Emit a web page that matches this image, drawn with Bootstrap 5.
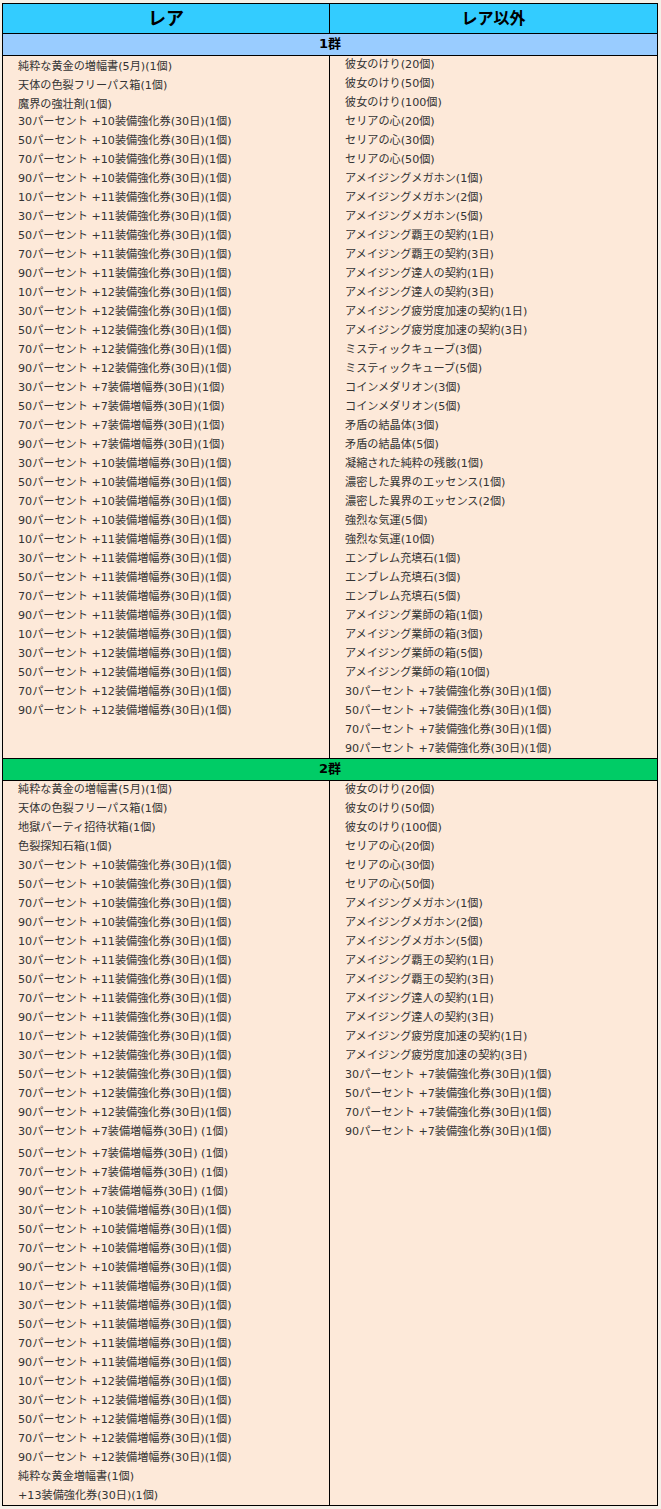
<!DOCTYPE html>
<html lang="ja"><head><meta charset="utf-8"><title>レア</title>
<link href="https://cdn.jsdelivr.net/npm/bootstrap@5.3.0/dist/css/bootstrap.min.css" rel="stylesheet">
<style>
body{background:#f4f0e8;font-family:"DejaVu Sans","Noto Sans CJK JP",sans-serif;font-size:11.15px;line-height:19px;color:#333;padding:3px 1px 0 2px}
.gacha{width:656px;table-layout:fixed;border-collapse:collapse;margin:0}
.gacha td,.gacha th{border:1px solid #000;padding:0;color:#000}
.gacha .col-rare{width:327px}
.gacha .head{background:#3cf;font-size:18px;line-height:26px;padding-bottom:3px;font-family:"Noto Sans CJK JP",sans-serif}
.gacha .head2{font-size:16px}
.gacha .group{font-size:13px;line-height:19px;padding-bottom:2px}
.gacha .g1{background:#9cf}.gacha .g2{background:#0c6}
.gacha .items{background:#fde9d9;color:#333;padding-left:15px;font-weight:400}
.gacha .items>:first-child{margin-top:-1px}
.gacha .items>.first-low{margin-top:1px}
.row-short{margin-bottom:-2px}
.gapb{margin-bottom:3px}
</style></head><body>
<table class="table table-bordered gacha">
<colgroup><col class="col-rare"><col></colgroup>
<tr><th class="head text-center fw-bold">レア</th><th class="head head2 text-center fw-bold">レア以外</th></tr>
<tr><td class="group g1 text-center fw-bold" colspan="2">1群</td></tr>
<tr><td class="items align-top">
<div class="first-low">純粋な黄金の増幅書(5月)(1個)</div><div>天体の色裂フリーパス箱(1個)</div><div class="row-short">魔界の強壮剤(1個)</div>
<div>30パーセント +10装備強化券(30日)(1個)</div><div>50パーセント +10装備強化券(30日)(1個)</div><div>70パーセント +10装備強化券(30日)(1個)</div><div>90パーセント +10装備強化券(30日)(1個)</div>
<div>10パーセント +11装備強化券(30日)(1個)</div><div>30パーセント +11装備強化券(30日)(1個)</div><div>50パーセント +11装備強化券(30日)(1個)</div><div>70パーセント +11装備強化券(30日)(1個)</div><div>90パーセント +11装備強化券(30日)(1個)</div>
<div>10パーセント +12装備強化券(30日)(1個)</div><div>30パーセント +12装備強化券(30日)(1個)</div><div>50パーセント +12装備強化券(30日)(1個)</div><div>70パーセント +12装備強化券(30日)(1個)</div><div>90パーセント +12装備強化券(30日)(1個)</div>
<div>30パーセント +7装備増幅券(30日)(1個)</div><div>50パーセント +7装備増幅券(30日)(1個)</div><div>70パーセント +7装備増幅券(30日)(1個)</div><div>90パーセント +7装備増幅券(30日)(1個)</div>
<div>30パーセント +10装備増幅券(30日)(1個)</div><div>50パーセント +10装備増幅券(30日)(1個)</div><div>70パーセント +10装備増幅券(30日)(1個)</div><div>90パーセント +10装備増幅券(30日)(1個)</div>
<div>10パーセント +11装備増幅券(30日)(1個)</div><div>30パーセント +11装備増幅券(30日)(1個)</div><div>50パーセント +11装備増幅券(30日)(1個)</div><div>70パーセント +11装備増幅券(30日)(1個)</div><div>90パーセント +11装備増幅券(30日)(1個)</div>
<div>10パーセント +12装備増幅券(30日)(1個)</div><div>30パーセント +12装備増幅券(30日)(1個)</div><div>50パーセント +12装備増幅券(30日)(1個)</div><div>70パーセント +12装備増幅券(30日)(1個)</div><div>90パーセント +12装備増幅券(30日)(1個)</div>
</td><td class="items align-top">
<div>彼女のけり(20個)</div><div>彼女のけり(50個)</div><div>彼女のけり(100個)</div><div>セリアの心(20個)</div><div>セリアの心(30個)</div><div>セリアの心(50個)</div>
<div>アメイジングメガホン(1個)</div><div>アメイジングメガホン(2個)</div><div>アメイジングメガホン(5個)</div><div>アメイジング覇王の契約(1日)</div><div>アメイジング覇王の契約(3日)</div><div>アメイジング達人の契約(1日)</div><div>アメイジング達人の契約(3日)</div><div>アメイジング疲労度加速の契約(1日)</div><div>アメイジング疲労度加速の契約(3日)</div>
<div>ミスティックキューブ(3個)</div><div>ミスティックキューブ(5個)</div><div>コインメダリオン(3個)</div><div>コインメダリオン(5個)</div><div>矛盾の結晶体(3個)</div><div>矛盾の結晶体(5個)</div><div>凝縮された純粋の残骸(1個)</div><div>濃密した異界のエッセンス(1個)</div><div>濃密した異界のエッセンス(2個)</div><div>強烈な気運(5個)</div><div>強烈な気運(10個)</div><div>エンブレム充填石(1個)</div><div>エンブレム充填石(3個)</div><div>エンブレム充填石(5個)</div><div>アメイジング業師の箱(1個)</div><div>アメイジング業師の箱(3個)</div><div>アメイジング業師の箱(5個)</div><div>アメイジング業師の箱(10個)</div>
<div>30パーセント +7装備強化券(30日)(1個)</div><div>50パーセント +7装備強化券(30日)(1個)</div><div>70パーセント +7装備強化券(30日)(1個)</div><div>90パーセント +7装備強化券(30日)(1個)</div>
</td></tr>
<tr><td class="group g2 text-center fw-bold" colspan="2">2群</td></tr>
<tr><td class="items align-top">
<div>純粋な黄金の増幅書(5月)(1個)</div><div>天体の色裂フリーパス箱(1個)</div><div>地獄パーティ招待状箱(1個)</div><div>色裂探知石箱(1個)</div>
<div>30パーセント +10装備強化券(30日)(1個)</div><div>50パーセント +10装備強化券(30日)(1個)</div><div>70パーセント +10装備強化券(30日)(1個)</div><div>90パーセント +10装備強化券(30日)(1個)</div>
<div>10パーセント +11装備強化券(30日)(1個)</div><div>30パーセント +11装備強化券(30日)(1個)</div><div>50パーセント +11装備強化券(30日)(1個)</div><div>70パーセント +11装備強化券(30日)(1個)</div><div>90パーセント +11装備強化券(30日)(1個)</div>
<div>10パーセント +12装備強化券(30日)(1個)</div><div>30パーセント +12装備強化券(30日)(1個)</div><div>50パーセント +12装備強化券(30日)(1個)</div><div>70パーセント +12装備強化券(30日)(1個)</div><div>90パーセント +12装備強化券(30日)(1個)</div>
<div class="gapb">30パーセント +7装備増幅券(30日) (1個)</div><div>50パーセント +7装備増幅券(30日) (1個)</div><div>70パーセント +7装備増幅券(30日) (1個)</div><div>90パーセント +7装備増幅券(30日) (1個)</div>
<div>30パーセント +10装備増幅券(30日)(1個)</div><div>50パーセント +10装備増幅券(30日)(1個)</div><div>70パーセント +10装備増幅券(30日)(1個)</div><div>90パーセント +10装備増幅券(30日)(1個)</div>
<div>10パーセント +11装備増幅券(30日)(1個)</div><div>30パーセント +11装備増幅券(30日)(1個)</div><div>50パーセント +11装備増幅券(30日)(1個)</div><div>70パーセント +11装備増幅券(30日)(1個)</div><div>90パーセント +11装備増幅券(30日)(1個)</div>
<div>10パーセント +12装備増幅券(30日)(1個)</div><div>30パーセント +12装備増幅券(30日)(1個)</div><div>50パーセント +12装備増幅券(30日)(1個)</div><div>70パーセント +12装備増幅券(30日)(1個)</div><div>90パーセント +12装備増幅券(30日)(1個)</div>
<div>純粋な黄金増幅書(1個)</div><div>+13装備強化券(30日)(1個)</div>
</td><td class="items align-top">
<div>彼女のけり(20個)</div><div>彼女のけり(50個)</div><div>彼女のけり(100個)</div><div>セリアの心(20個)</div><div>セリアの心(30個)</div><div>セリアの心(50個)</div>
<div>アメイジングメガホン(1個)</div><div>アメイジングメガホン(2個)</div><div>アメイジングメガホン(5個)</div><div>アメイジング覇王の契約(1日)</div><div>アメイジング覇王の契約(3日)</div><div>アメイジング達人の契約(1日)</div><div>アメイジング達人の契約(3日)</div><div>アメイジング疲労度加速の契約(1日)</div><div>アメイジング疲労度加速の契約(3日)</div>
<div>30パーセント +7装備強化券(30日)(1個)</div><div>50パーセント +7装備強化券(30日)(1個)</div><div>70パーセント +7装備強化券(30日)(1個)</div><div>90パーセント +7装備強化券(30日)(1個)</div>
</td></tr>
</table>
<script src="https://cdn.jsdelivr.net/npm/bootstrap@5.3.0/dist/js/bootstrap.bundle.min.js"></script>
</body></html>
